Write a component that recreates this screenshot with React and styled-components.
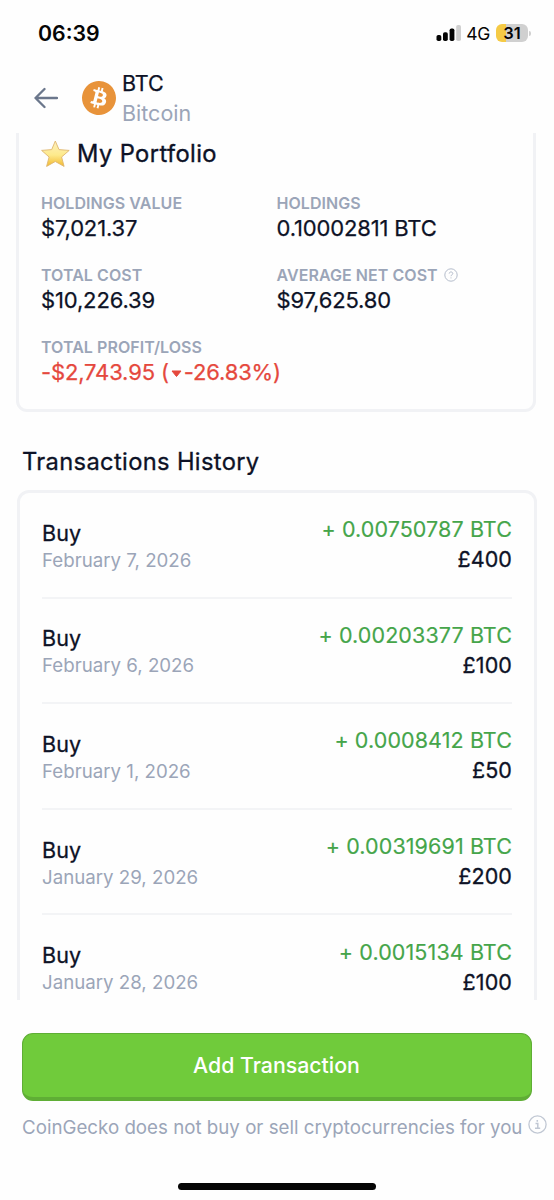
import styled, { createGlobalStyle } from 'styled-components'
import { SiBitcoin } from 'react-icons/si'

const GlobalStyle = createGlobalStyle`
  * {
    box-sizing: border-box;
  }
  body {
    margin: 0;
    background: #fefefe;
    font-family: Inter, 'Liberation Sans', sans-serif;
    color: #0d1226;
  }
`

const Screen = styled.div`
  display: flex;
  flex-direction: column;
  width: 554px;
  height: 1200px;
  overflow: hidden;
  background: #fefefe;
`

const StatusBar = styled.div`
  display: flex;
  align-items: center;
  justify-content: space-between;
  height: 66px;
  padding: 0 23px 0 38px;
  color: #050505;
`

const Clock = styled.span`
  font-size: 21.3px;
  font-weight: 600;
  line-height: 28px;
`

const StatusIcons = styled.div`
  display: flex;
  align-items: center;
`

const Network = styled.span`
  margin: 2px 6px 0 5px;
  font-size: 17.5px;
  line-height: 22px;
  letter-spacing: -0.3px;
`

const Battery = styled.div`
  width: 32px;
  height: 18px;
  border-radius: 6px;
  background: linear-gradient(90deg, #f5ca45 31%, #d0d0d0 31%);
  font-size: 16.5px;
  font-weight: 600;
  line-height: 19px;
  text-align: center;
`

const BatteryTip = styled.span`
  width: 2px;
  height: 5px;
  margin-left: 1px;
  border-radius: 0 2px 2px 0;
  background: #d0d0d0;
`

const Header = styled.header`
  display: flex;
  align-items: center;
  height: 67px;
  padding: 0 0 3px 33px;
`

const CoinLogo = styled.div`
  display: flex;
  margin: 0 6px 0 24px;
  color: #e8933a;
`

const CoinName = styled.div`
  font-size: 21.5px;
  line-height: 30px;
  color: ${(props) => (props.$muted ? '#9ba5b8' : '#0d1226')};
  -webkit-text-stroke: ${(props) => (props.$muted ? 0 : '0.25px')};
`

const Content = styled.main`
  height: 867px;
  padding: 0 17px;
  overflow: hidden;
`

const PortfolioCard = styled.section`
  width: 520px;
  height: 279px;
  margin-left: -1px;
  padding: 5px 22px 0;
  border: 3px solid #f1f2f5;
  border-top: 0;
  border-radius: 0 0 11px 11px;
`

const CardTitle = styled.h2`
  display: flex;
  align-items: center;
  gap: 7px;
  margin: 0 0 23px;
  font-size: 23.7px;
  font-weight: 400;
  line-height: 32px;
  letter-spacing: 0.4px;
  -webkit-text-stroke: 0.35px;
`

const Stats = styled.div`
  display: grid;
  grid-template-columns: 235.5px 1fr;
  row-gap: 22px;
`

const StatLabel = styled.div`
  display: flex;
  align-items: center;
  gap: 6px;
  font-size: 16px;
  font-weight: 600;
  line-height: 20px;
  letter-spacing: 0.05px;
  color: #9ba5b8;
`

const StatValue = styled.div`
  display: flex;
  align-items: center;
  font-size: 22px;
  line-height: 30px;
  letter-spacing: -0.15px;
  white-space: nowrap;
  color: ${(props) => (props.$loss ? '#e5483d' : '#0d1226')};
  -webkit-text-stroke: 0.25px;
  svg {
    flex-shrink: 0;
    margin-top: 3px;
  }
`

const SectionTitle = styled.h2`
  margin: 34px 0 12px 5px;
  font-size: 23.7px;
  font-weight: 400;
  line-height: 32px;
  letter-spacing: 0.35px;
  -webkit-text-stroke: 0.3px;
`

const TransactionsCard = styled.section`
  width: 520px;
  padding: 0 22px;
  border: 3px solid #f1f2f5;
  border-radius: 12px;
`

const Transaction = styled.div`
  display: flex;
  align-items: center;
  justify-content: space-between;
  height: 105.6px;
  border-bottom: 2px solid #f3f4f6;
`

const TransactionType = styled.div`
  padding-top: 3px;
  font-size: 21.5px;
  line-height: 28px;
  letter-spacing: 0.1px;
  -webkit-text-stroke: 0.3px;
`

const TransactionDate = styled.div`
  font-size: 18.7px;
  line-height: 27px;
  color: #9ba5b8;
`

const Amounts = styled.div`
  margin-top: -1px;
  text-align: right;
  font-size: 21.5px;
  line-height: 30px;
`

const CoinAmount = styled.div`
  letter-spacing: 0.1px;
  color: #45a54a;
  -webkit-text-stroke: 0.15px;
`

const FiatAmount = styled.div`
  letter-spacing: 0.1px;
  -webkit-text-stroke: 0.3px;
`

const Footer = styled.footer`
  display: flex;
  flex-direction: column;
  height: 200px;
  padding: 33px 0 0 22px;
`

const AddButton = styled.button`
  width: 510px;
  height: 68px;
  padding: 0 1px 1px 0;
  border: 1px solid #5fae35;
  border-bottom-width: 4px;
  border-radius: 11px;
  background: #70cb3b;
  color: #fff;
  font-family: inherit;
  font-size: 21.3px;
  font-weight: 500;
  line-height: 28px;
`

const Disclaimer = styled.p`
  display: flex;
  gap: 6px;
  margin: 13px 0 0;
  font-size: 18.73px;
  line-height: 27px;
  white-space: nowrap;
  color: #9ba5b8;
  svg {
    margin-top: 1px;
  }
`

const HomeIndicator = styled.div`
  width: 198px;
  height: 7px;
  margin: 42px 0 0 156px;
  border-radius: 4px;
  background: #050505;
`

const transactions = [
  { date: 'February 7, 2026', coin: '0.00750787', fiat: '£400' },
  { date: 'February 6, 2026', coin: '0.00203377', fiat: '£100' },
  { date: 'February 1, 2026', coin: '0.0008412', fiat: '£50' },
  { date: 'January 29, 2026', coin: '0.00319691', fiat: '£200' },
  { date: 'January 28, 2026', coin: '0.0015134', fiat: '£100' },
]

const SignalIcon = () => (
  <svg width='25' height='16' viewBox='0 0 25 16'>
    <rect x='0.5' y='10' width='4.8' height='6' rx='1.8' fill='#050505' />
    <rect x='7' y='7.3' width='4.8' height='8.7' rx='1.8' fill='#050505' />
    <rect x='13.6' y='3.5' width='4.8' height='12.5' rx='1.8' fill='#050505' />
    <rect x='20.2' y='0' width='4.8' height='16' rx='1.8' fill='#d0d0d0' />
  </svg>
)

const BackIcon = () => (
  <svg width='25' height='22' viewBox='0 0 25 22' fill='none'>
    <path
      d='M24 11H2.5M11.5 2L2.5 11L11.5 20'
      stroke='#6b778c'
      strokeWidth='2.3'
      strokeLinecap='round'
      strokeLinejoin='round'
    />
  </svg>
)

const StarIcon = () => (
  <svg width='29' height='28' viewBox='0 0 29 28'>
    <defs>
      <linearGradient id='star' x1='0' y1='0' x2='0' y2='1'>
        <stop offset='0' stopColor='#fdf0c0' />
        <stop offset='0.55' stopColor='#fdea8c' />
        <stop offset='1' stopColor='#f2b92f' />
      </linearGradient>
    </defs>
    <path
      d='M14.3 1L18 9.6L28.2 10.4L20.6 17L23.1 26.4L14.3 21.5L5.6 26.4L8.1 17L0.6 10.4L10.7 9.6Z'
      fill='url(#star)'
      stroke='#dfb56e'
      strokeWidth='0.9'
      strokeLinejoin='round'
    />
  </svg>
)

const HelpIcon = () => (
  <svg width='14' height='14' viewBox='0 0 14 14' fill='none' stroke='#b4bccb'>
    <circle cx='7' cy='7' r='6.2' />
    <path d='M5.2 5.6C5.2 3.4 8.8 3.4 8.8 5.6C8.8 6.8 7 6.8 7 8.2M7 9.4V10.4' />
  </svg>
)

const InfoIcon = () => (
  <svg width='19' height='19' viewBox='0 0 19 19' fill='none' stroke='#c0c7d3'>
    <circle cx='9.5' cy='9.5' r='8.6' strokeWidth='1.3' />
    <path d='M7.5 8.5H9.8V13M7 13.2H12.2M9.3 5V6.8' strokeWidth='1.5' />
  </svg>
)

const CaretIcon = () => (
  <svg width='15' height='8' viewBox='0 0 15 8'>
    <path d='M3 1H12L7.5 6.5Z' fill='#e5483d' stroke='#e5483d' strokeLinejoin='round' />
  </svg>
)

function Stat({ label, icon, loss, children }) {
  return (
    <div>
      <StatLabel>
        {label}
        {icon}
      </StatLabel>
      <StatValue $loss={loss}>{children}</StatValue>
    </div>
  )
}

export default function App() {
  return (
    <Screen>
      <GlobalStyle />
      <StatusBar>
        <Clock>06:39</Clock>
        <StatusIcons>
          <SignalIcon />
          <Network>4G</Network>
          <Battery>31</Battery>
          <BatteryTip />
        </StatusIcons>
      </StatusBar>
      <Header>
        <BackIcon />
        <CoinLogo>
          <SiBitcoin size={34} />
        </CoinLogo>
        <div>
          <CoinName>BTC</CoinName>
          <CoinName $muted>Bitcoin</CoinName>
        </div>
      </Header>
      <Content>
        <PortfolioCard>
          <CardTitle>
            <StarIcon />
            My Portfolio
          </CardTitle>
          <Stats>
            <Stat label='HOLDINGS VALUE'>$7,021.37</Stat>
            <Stat label='HOLDINGS'>0.10002811 BTC</Stat>
            <Stat label='TOTAL COST'>$10,226.39</Stat>
            <Stat label='AVERAGE NET COST' icon={<HelpIcon />}>
              $97,625.80
            </Stat>
            <Stat label='TOTAL PROFIT/LOSS' loss>
              -$2,743.95 (<CaretIcon />
              -26.83%)
            </Stat>
          </Stats>
        </PortfolioCard>
        <SectionTitle>Transactions History</SectionTitle>
        <TransactionsCard>
          {transactions.map((transaction) => (
            <Transaction key={transaction.date}>
              <div>
                <TransactionType>Buy</TransactionType>
                <TransactionDate>{transaction.date}</TransactionDate>
              </div>
              <Amounts>
                <CoinAmount>+ {transaction.coin} BTC</CoinAmount>
                <FiatAmount>{transaction.fiat}</FiatAmount>
              </Amounts>
            </Transaction>
          ))}
        </TransactionsCard>
      </Content>
      <Footer>
        <AddButton>Add Transaction</AddButton>
        <Disclaimer>
          CoinGecko does not buy or sell cryptocurrencies for you
          <InfoIcon />
        </Disclaimer>
        <HomeIndicator />
      </Footer>
    </Screen>
  )
}
